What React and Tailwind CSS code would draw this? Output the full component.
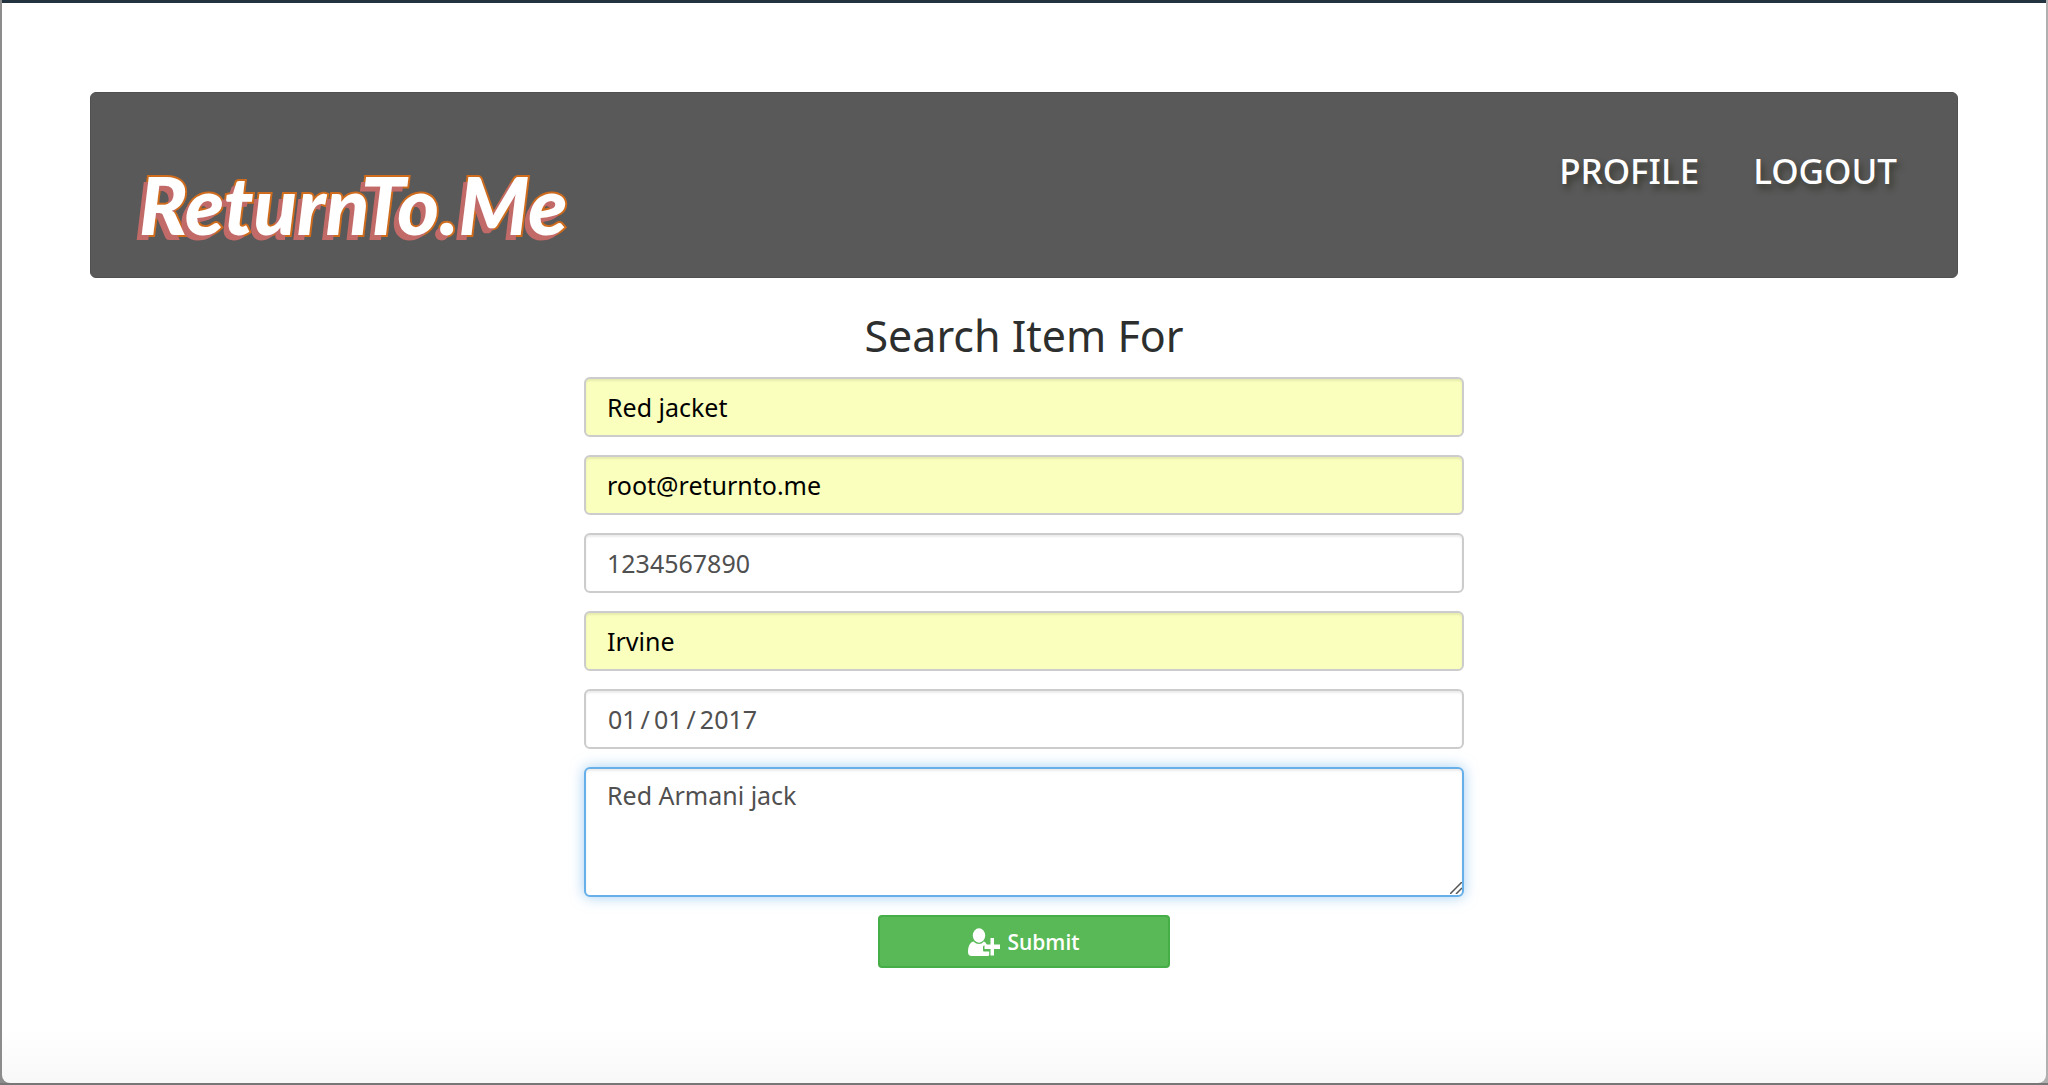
import React, { useState } from 'react'

const inputBase = "block w-full h-[60px] rounded-md border-2 px-[21px] text-[25px] leading-8 outline-none shadow-[inset_0_2px_2px_rgba(0,0,0,0.08)] border-[#cccccc]"

const fields = [
  { name: "item", label: "Item", type: "text", filled: true },
  { name: "email", label: "Email", type: "email", filled: true },
  { name: "phone", label: "Phone", type: "tel", filled: false },
  { name: "city", label: "City", type: "text", filled: true },
  { name: "date", label: "Date", type: "date", filled: false },
]

function UserPlusIcon() {
  return (
    <svg className="w-8 h-7 shrink-0" viewBox="0 0 32 28" fill="#fff" aria-hidden="true">
      <ellipse cx="11" cy="7.500" rx="6.2" ry="7.2" />
      <path d="M5.5 13.5C1.5 14.5 0 19 0 24c0 2.5 1.3 4 3.5 4H20c.6 0 1-.4 1.2-1v-3.500h-4.700c-1 0-1.500-.5-1.500-1.500v-3c0-1 .5-1.500 1.500-1.500H19c-.6-2-1.500-3.600-3.200-4-1.300 1.700-3 2.500-4.800 2.500s-4-.8-5.500-2.500z" />
      <path d="M22.500 10h3.500v6.500H32V21h-6v6.500h-3.500V21h-6v-4.500h6z" />
    </svg>
  )
}

function Header() {
  return (
    <header className="flex justify-between h-[186px] rounded-md border border-[#505050] bg-[#595959] pl-[48px] pr-[60px]">
      <a href="#home" className="mt-[65px] font-[Lato] text-[80px] leading-[92px] font-black italic text-white [-webkit-text-stroke:4px_#cf6b1c] [paint-order:stroke_fill] [text-shadow:-5px_5px_0_#c26a68]">
        ReturnTo.Me
      </a>
      <nav className="mt-[52px] flex items-start gap-[54px] text-[35px] leading-[52px] font-medium text-white [text-shadow:3px_5px_6px_rgba(40,40,30,0.7)]">
        <a href="#profile">PROFILE</a>
        <a href="#logout">LOGOUT</a>
      </nav>
    </header>
  )
}

export default function App() {
  const [form, setForm] = useState({
    item: "Red jacket",
    email: "root@returnto.me",
    phone: "1234567890",
    city: "Irvine",
    date: "2017-01-01",
    description: "Red Armani jack",
  })

  const handleChange = (e) => {
    setForm({ ...form, [e.target.name]: e.target.value })
  }

  return (
    <div className="min-h-screen flex bg-linear-to-r from-[#8c8c8c] to-[#b0b0b0] border-b-2 border-[#777777] font-['Noto_Sans','Open_Sans',sans-serif]">
      <div className="flex-1 mx-[2px] border-t-3 border-[#22323e] rounded-b-lg bg-linear-to-t from-[#f8f8f8] to-white to-5% px-[88px] pt-[89px] pb-10">
        <Header />

        <main className="mx-auto mt-[30px] w-full max-w-[880px]">
          <h1 className="text-center text-[43px] leading-[56px] text-[#2d2f2f]">Search Item For</h1>

          <form className="mt-[13px] flex flex-col gap-[18px]" onSubmit={(e) => e.preventDefault()}>
            {fields.map((field) => (
              <input
                key={field.name}
                name={field.name}
                type={field.type}
                aria-label={field.label}
                value={form[field.name]}
                onChange={handleChange}
                className={`${inputBase} [&::-webkit-calendar-picker-indicator]:hidden [&::-webkit-datetime-edit-text]:px-[3px] ${field.filled ? "bg-[#faffbd] text-black" : "bg-white text-[#505050]"}`}
              />
            ))}

            <div className="relative">
              <textarea
                name="description"
                aria-label="Description"
                value={form.description}
                onChange={handleChange}
                className="block w-full h-[130px] resize-none rounded-md border-2 border-[#66afe9] bg-white px-[21px] py-[10px] text-[25px] leading-8 text-[#505050] outline-none shadow-[inset_0_2px_2px_rgba(0,0,0,0.08),0_0_14px_rgba(102,175,233,0.6)]"
              />
              {/* resize grip */}
              <svg className="absolute right-[2px] bottom-[3px] w-3 h-3 pointer-events-none" viewBox="0 0 12 12" stroke="#555" strokeWidth="1.500" aria-hidden="true">
                <path d="M0 12L12 0M6 12l6-6" />
              </svg>
            </div>

            <button type="submit" className="mx-auto flex h-[53px] w-[292px] items-center justify-center gap-[7px] rounded border-2 border-[#46ae46] bg-[#59b957] font-['Open_Sans'] text-[21px] leading-7 font-semibold text-white">
              <UserPlusIcon />
              Submit
            </button>
          </form>
        </main>
      </div>
    </div>
  )
}
